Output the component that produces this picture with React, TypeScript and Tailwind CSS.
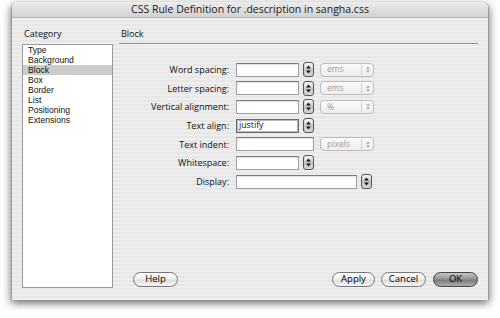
type Row = {
  label: string;
  width: number;
  stepper?: boolean;
  unit?: string;
  value?: string;
  focused?: boolean;
};

const rows: Row[] = [
  { label: "Word spacing:", width: 63, stepper: true, unit: "ems" },
  { label: "Letter spacing:", width: 63, stepper: true, unit: "ems" },
  { label: "Vertical alignment:", width: 63, stepper: true, unit: "%" },
  { label: "Text align:", width: 63, stepper: true, value: "justify", focused: true },
  { label: "Text indent:", width: 78, unit: "pixels" },
  { label: "Whitespace:", width: 63, stepper: true },
  { label: "Display:", width: 121, stepper: true },
];

const categories = [
  "Type",
  "Background",
  "Block",
  "Box",
  "Border",
  "List",
  "Positioning",
  "Extensions",
];

function Stepper() {
  return (
    <div className="w-[11px] h-[15px] shrink-0 rounded-[3px] border border-[#555] bg-[linear-gradient(to_bottom,#f6f6f6,#c4c4c4_55%,#d8d8d8)] flex items-center justify-center">
      <svg width="5" height="9" viewBox="0 0 5 9">
        <path d="M2.5 0.5 L4.8 3.5 L0.2 3.5 Z" fill="#111" />
        <path d="M2.5 8.5 L4.8 5.5 L0.2 5.5 Z" fill="#111" />
      </svg>
    </div>
  );
}

function UnitSelect({ text }: { text: string }) {
  return (
    <div className="w-[54px] h-[14px] shrink-0 rounded-[4px] border border-[#bcbcbc] bg-[linear-gradient(to_bottom,#fbfbfb,#ededed)] flex items-center">
      <span className="flex-1 pl-[6px] text-[8.6px] leading-none text-[#9c9c9c]">{text}</span>
      <span className="w-[12px] h-[10px] border-l border-[#d2d2d2] flex items-center justify-center">
        <svg width="4" height="7" viewBox="0 0 4 7">
          <path d="M2 0.5 L3.8 2.7 L0.2 2.7 Z" fill="#a0a0a0" />
          <path d="M2 6.5 L3.8 4.3 L0.2 4.3 Z" fill="#a0a0a0" />
        </svg>
      </span>
    </div>
  );
}

function Button({ label, width, primary }: { label: string; width: number; primary?: boolean }) {
  return (
    <div
      style={{ width }}
      className={
        primary
          ? "h-[15px] rounded-full border border-[#444] bg-[linear-gradient(to_bottom,#c4c4c4,#979797_45%,#7a7a7a_55%,#acacac)] flex items-center justify-center text-[9.5px] font-medium text-black"
          : "h-[15px] rounded-full border border-[#767676] bg-[linear-gradient(to_bottom,#ffffff,#f1f1f1_45%,#dedede_55%,#f6f6f6)] flex items-center justify-center text-[9.5px] font-medium text-black"
      }
    >
      {label}
    </div>
  );
}

export default function App() {
  return (
    <div className="w-[500px] h-[318px] bg-white pl-[11px] pt-[2px] font-['Open_Sans',sans-serif] text-[#111]">
      <div className="w-[478px] h-[298px] rounded-t-[6px] shadow-[0_3px_8px_rgba(0,0,0,0.6)] flex flex-col overflow-hidden border-x border-[#9a9a9a]">
        <div className="h-[16px] shrink-0 bg-[linear-gradient(to_bottom,#ececec,#d2d2d2)] border-b border-[#b4b4b4] flex items-center justify-center text-[10.5px] text-[#1a1a1a]">
          CSS Rule Definition for .description in sangha.css
        </div>

        <div className="flex-1 flex px-[10px] bg-[repeating-linear-gradient(to_bottom,#eeeeee_0px,#eeeeee_2px,#e7e7e7_2px,#e7e7e7_4px)]">
          <div className="w-[91px] shrink-0 pt-[10px] flex flex-col">
            <div className="h-[12px] pl-[2px] text-[9px] leading-[12px]">Category</div>
            <div className="mt-[4px] h-[244px] bg-white border border-[#9a9a9a] font-['Liberation_Sans',sans-serif]">
              {categories.map((c) => (
                <div
                  key={c}
                  className={
                    c === "Block"
                      ? "h-[10px] pl-[5px] text-[8.6px] leading-[10px] bg-[#cbcbcb]"
                      : "h-[10px] pl-[5px] text-[8.6px] leading-[10px]"
                  }
                >
                  {c}
                </div>
              ))}
            </div>
          </div>

          <div className="ml-[6px] w-[360px] pt-[10px] pb-[13px] flex flex-col">
            <div className="h-[12px] pl-[2px] text-[9px] leading-[12px]">Block</div>
            <div className="mt-[3px] h-[2px] border-t border-[#8c8c8c] border-b border-b-[#fafafa]" />

            <div className="mt-[17px] flex flex-col gap-[3.7px]">
              {rows.map((r) => (
                <div key={r.label} className="h-[15px] flex items-center">
                  <span className="w-[110px] shrink-0 text-right text-[9px] leading-none">{r.label}</span>
                  <div className="ml-[7px] flex items-center">
                    <div
                      style={{ width: r.width }}
                      className={
                        r.focused
                          ? "h-[14px] bg-white border border-[#6a6a6a] shadow-[inset_0_0_0_1px_#b9b9b9] flex items-center pl-[2px] text-[8.8px] leading-none"
                          : "h-[14px] bg-white border border-[#a0a0a0] border-t-[#7a7a7a] shadow-[inset_0_1px_1px_rgba(0,0,0,0.12)]"
                      }
                    >
                      {r.value}
                    </div>
                    {r.stepper && (
                      <div className="ml-[4px]">
                        <Stepper />
                      </div>
                    )}
                    {r.unit && (
                      <div className="ml-[6px]">
                        <UnitSelect text={r.unit} />
                      </div>
                    )}
                  </div>
                </div>
              ))}
            </div>

            <div className="mt-auto flex items-center">
              <div className="ml-[14px]">
                <Button label="Help" width={45} />
              </div>
              <div className="ml-auto flex items-center gap-[6px]">
                <Button label="Apply" width={43} />
                <Button label="Cancel" width={45} />
                <div className="ml-[1px]">
                  <Button label="OK" width={45} primary />
                </div>
              </div>
            </div>
          </div>
        </div>
      </div>
    </div>
  );
}
